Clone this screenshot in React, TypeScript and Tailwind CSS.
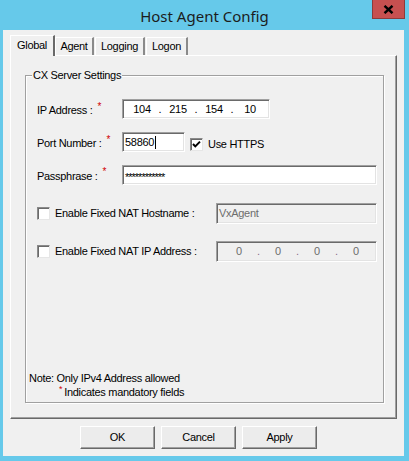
import React from "react";

const font = { fontFamily: '"Liberation Sans", Arial, sans-serif' };

function Star() {
  return <span className="ml-[5px] relative -top-[4px] text-[#d00000] text-[10px] leading-none">*</span>;
}

function CheckBox({ checked }: { checked?: boolean }) {
  return (
    <div className="w-[13px] h-[13px] shrink-0 bg-white border border-t-[#8a8a8a] border-l-[#8a8a8a] border-b-[#e6e6e6] border-r-[#e6e6e6] shadow-[inset_1px_1px_0_#6a6a6a] flex items-center justify-center">
      {checked && (
        <svg width="9" height="9" viewBox="0 0 9 9">
          <path d="M1 4 L3.3 6.4 L8 1.6" stroke="#000" strokeWidth="2" fill="none" />
        </svg>
      )}
    </div>
  );
}

const sunken =
  "border border-t-[#a0a0a0] border-l-[#a0a0a0] border-b-white border-r-white shadow-[inset_1px_1px_0_#6a6a6a,inset_-1px_-1px_0_#e3e3e3]";

function Button({ label }: { label: string }) {
  return (
    <div className="w-[75px] h-[23px] bg-[#ececec] border border-t-white border-l-white border-b-[#696969] border-r-[#696969] shadow-[inset_-1px_-1px_0_#a0a0a0] flex items-center justify-center text-[11px] text-black">
      {label}
    </div>
  );
}

export default function App() {
  return (
    <div className="w-[409px] h-[461px] bg-[#66c9ea] flex flex-col" style={font}>
      {/* title bar */}
      <div className="h-[30px] relative flex items-center justify-center">
        <span className="text-[15px] text-[#1c1c1c] pt-[3px]" style={{ fontFamily: '"Noto Sans", "Open Sans", sans-serif' }}>
          Host Agent Config
        </span>
        <div className="absolute right-[4px] top-0 w-[33px] h-[19px] bg-[#c75050] border border-t-0 border-[#8c3b3b] flex items-center justify-center">
          <svg width="11" height="9" viewBox="0 0 11 9">
            <path d="M1.5 0.8 L9.5 8.2 M9.5 0.8 L1.5 8.2" stroke="#000" strokeWidth="2.4" />
          </svg>
        </div>
      </div>

      {/* client */}
      <div className="ml-[3px] mr-[5px] mb-[5px] flex-1 bg-[#f0f0f0] flex flex-col pl-[7px] pr-[7px] pt-[5px] tracking-[-0.3px] text-[11px] text-black">
        {/* tabs */}
        <div className="h-[20px] flex items-end">
          <div className="relative z-10 -mb-px w-[45px] h-[21px] bg-[#f0f0f0] border-t border-l border-t-white border-l-white border-r-2 border-r-[#696969] flex items-center justify-center pb-[1px]">
            Global
          </div>
          <div className="w-[39px] h-[18px] border-t border-l border-t-white border-l-white border-r-2 border-r-[#8a8a8a] flex items-center justify-center">
            Agent
          </div>
          <div className="ml-[1px] w-[50px] h-[18px] border-t border-l border-t-white border-l-white border-r-2 border-r-[#8a8a8a] flex items-center justify-center">
            Logging
          </div>
          <div className="ml-[1px] w-[42px] h-[18px] border-t border-l border-t-white border-l-white border-r-2 border-r-[#8a8a8a] flex items-center justify-center">
            Logon
          </div>
        </div>

        {/* tab panel */}
        <div className="h-[364px] border border-t-white border-l-white border-b-[#696969] border-r-[#696969] shadow-[inset_-1px_-1px_0_#a0a0a0] pl-[14px] pt-[19px]">
          {/* group box */}
          <div className="relative w-[359px] h-[328px] border border-[#a0a0a0] shadow-[1px_1px_0_#ffffff,inset_1px_1px_0_#ffffff] flex flex-col pl-[11px]">
            <span className="absolute -top-[8px] left-[6px] bg-[#f0f0f0] px-[1px] leading-[14px]">CX Server Settings</span>

            {/* IP */}
            <div className="mt-[23px] h-[20px] flex items-center">
              <div className="w-[85px] flex items-center pt-[3px]">
                IP Address :<Star />
              </div>
              <div className={`w-[148px] h-[20px] bg-white ${sunken} flex items-center pl-[5px]`}>
                <span className="w-[28px] text-center">104</span>
                <span className="w-[8px] text-center">.</span>
                <span className="w-[28px] text-center">215</span>
                <span className="w-[8px] text-center">.</span>
                <span className="w-[28px] text-center">154</span>
                <span className="w-[8px] text-center">.</span>
                <span className="w-[28px] text-center">10</span>
              </div>
            </div>

            {/* Port */}
            <div className="mt-[13px] h-[20px] flex items-center">
              <div className="w-[85px] flex items-center pt-[3px]">
                Port Number :<Star />
              </div>
              <div className={`w-[63px] h-[20px] bg-white ${sunken} flex items-center pl-[2px]`}>
                <span>58860</span>
                <span className="w-px h-[13px] bg-black ml-[1px]" />
              </div>
              <div className="ml-[5px] mt-[4px]">
                <CheckBox checked />
              </div>
              <span className="ml-[5px] pt-[4px]">Use HTTPS</span>
            </div>

            {/* Passphrase */}
            <div className="mt-[13px] h-[20px] flex items-center">
              <div className="w-[85px] flex items-center pt-[2px]">
                Passphrase :<Star />
              </div>
              <div className={`w-[255px] h-[20px] bg-white ${sunken} flex items-center pl-[2px]`}>
                <span className="tracking-[-1px] pt-[4px] text-[11px]">************</span>
              </div>
            </div>

            {/* NAT Hostname */}
            <div className="mt-[18px] h-[21px] flex items-center">
              <div className="w-[179px] flex items-center">
                <CheckBox />
                <span className="ml-[5px]">Enable Fixed NAT Hostname :</span>
              </div>
              <div className={`w-[161px] h-[21px] bg-[#f0f0f0] ${sunken} flex items-center pl-[2px] text-[#6d6d6d]`}>
                VxAgent
              </div>
            </div>

            {/* NAT IP */}
            <div className="mt-[17px] h-[21px] flex items-center">
              <div className="w-[179px] flex items-center">
                <CheckBox />
                <span className="ml-[5px]">Enable Fixed NAT IP Address :</span>
              </div>
              <div className={`w-[161px] h-[21px] bg-[#f0f0f0] ${sunken} flex items-center pl-[7px] text-[#6d6d6d]`}>
                <span className="w-[30px] text-center">0</span>
                <span className="w-[9px] text-center text-[#8a6d8a]">.</span>
                <span className="w-[30px] text-center">0</span>
                <span className="w-[9px] text-center text-[#8a6d8a]">.</span>
                <span className="w-[30px] text-center">0</span>
                <span className="w-[9px] text-center text-[#8a6d8a]">.</span>
                <span className="w-[30px] text-center">0</span>
              </div>
            </div>

            {/* Notes */}
            <div className="mt-auto pb-[3px] ml-[-8px] flex flex-col">
              <div className="h-[14px] leading-[14px]">Note: Only IPv4 Address allowed</div>
              <div className="h-[14px] leading-[14px] pl-[30px] flex items-center">
                <span className="text-[#d00000] text-[9px] relative -top-[3px] mr-[2px]">*</span>
                <span>Indicates mandatory fields</span>
              </div>
            </div>
          </div>
        </div>

        {/* buttons */}
        <div className="mt-[7px] flex pl-[70px] gap-[6px]">
          <Button label="OK" />
          <Button label="Cancel" />
          <Button label="Apply" />
        </div>
      </div>
    </div>
  );
}
